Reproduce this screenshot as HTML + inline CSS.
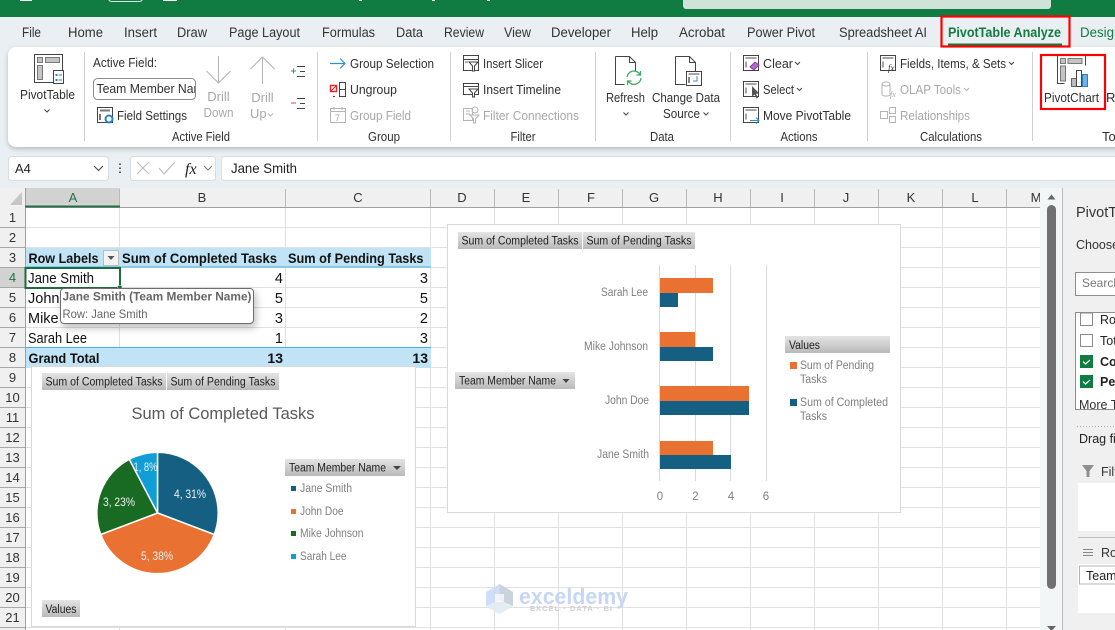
<!DOCTYPE html>
<html lang="en"><head><meta charset="utf-8"><title>Excel PivotChart</title>
<style>
html,body{margin:0;padding:0;background:#fff;width:1115px;height:630px;overflow:hidden}
svg{display:block}
text{font-family:"Liberation Sans",sans-serif;white-space:pre}
.r{font-size:13px;fill:#303030}
.g{font-size:13px;fill:#a8a8a8}
.tab{font-size:13.5px;fill:#333}
.cell{font-size:14.5px;fill:#111}
.b{font-size:14px;font-weight:bold;fill:#111}
.h{font-size:13px;fill:#333;text-anchor:middle}
.pb{font-size:11.5px;fill:#222}
.lg{font-size:11.5px;fill:#7f7f7f}
.pl{font-size:11.5px;fill:#f0f0f0}
.ic{fill:none;stroke:#444;stroke-width:1}
.ig{fill:none;stroke:#b4b4b4;stroke-width:1}
</style></head><body>
<svg width="1115" height="630" viewBox="0 0 1115 630" xmlns="http://www.w3.org/2000/svg">
<defs><linearGradient id="btn" x1="0" y1="0" x2="0" y2="1"><stop offset="0" stop-color="#e4e4e4"/><stop offset="1" stop-color="#b9b9b9"/></linearGradient>
<filter id="sh" x="-10%" y="-20%" width="120%" height="150%"><feDropShadow dx="0" dy="2" stdDeviation="2.5" flood-color="#000" flood-opacity=".22"/></filter>
<filter id="sh2" x="-10%" y="-30%" width="125%" height="190%"><feDropShadow dx="2" dy="4" stdDeviation="4" flood-color="#000" flood-opacity=".25"/></filter>
<clipPath id="inp"><rect x="96" y="78" width="99" height="21"/></clipPath>
<clipPath id="gridc"><rect x="0" y="188" width="1040" height="442"/></clipPath></defs>

<!-- title bar -->
<rect width="1115" height="630" fill="#e9eff2"/>
<rect width="1115" height="17" fill="#107c41"/>
<rect x="683" y="-4" width="368" height="13" rx="3" fill="#cfe3d8"/>
<path d="M20 .5H32M163 .5H177M359 .5H362M432 .5H435M487 .5H490" stroke="#fff" fill="none"/>
<rect x="108.500" y="-5" width="34" height="6.500" rx="3" fill="none" stroke="#d8e8de"/>

<!-- tabs -->
<text class="tab" x="22" y="37" textLength="19" lengthAdjust="spacingAndGlyphs">File</text>
<text class="tab" x="68" y="37" textLength="35" lengthAdjust="spacingAndGlyphs">Home</text>
<text class="tab" x="124" y="37" textLength="33" lengthAdjust="spacingAndGlyphs">Insert</text>
<text class="tab" x="177" y="37" textLength="30" lengthAdjust="spacingAndGlyphs">Draw</text>
<text class="tab" x="229" y="37" textLength="71" lengthAdjust="spacingAndGlyphs">Page Layout</text>
<text class="tab" x="322" y="37" textLength="53" lengthAdjust="spacingAndGlyphs">Formulas</text>
<text class="tab" x="396" y="37" textLength="27" lengthAdjust="spacingAndGlyphs">Data</text>
<text class="tab" x="444" y="37" textLength="40" lengthAdjust="spacingAndGlyphs">Review</text>
<text class="tab" x="504" y="37" textLength="27" lengthAdjust="spacingAndGlyphs">View</text>
<text class="tab" x="551" y="37" textLength="60" lengthAdjust="spacingAndGlyphs">Developer</text>
<text class="tab" x="631" y="37" textLength="27" lengthAdjust="spacingAndGlyphs">Help</text>
<text class="tab" x="679" y="37" textLength="46" lengthAdjust="spacingAndGlyphs">Acrobat</text>
<text class="tab" x="747" y="37" textLength="68" lengthAdjust="spacingAndGlyphs">Power Pivot</text>
<text class="tab" x="839" y="37" textLength="88" lengthAdjust="spacingAndGlyphs">Spreadsheet AI</text>
<text x="948" y="37" font-size="13.500" font-weight="bold" fill="#107c41" textLength="113" lengthAdjust="spacingAndGlyphs">PivotTable Analyze</text>
<text x="1080" y="37" font-size="13.500" fill="#107c41" textLength="48" lengthAdjust="spacingAndGlyphs">Designs</text>
<rect x="948" y="43.500" width="114" height="2" fill="#107c41"/>

<!-- ribbon -->
<rect x="8" y="47" width="1200" height="100" rx="8" fill="#fff" filter="url(#sh)"/>
<path d="M84.500 52V141M317.500 52V141M450.500 52V141M595.500 52V141M730.500 52V141M867.500 52V141M1032.500 52V141" stroke="#d0d0d0"/>

<!-- PivotTable icon -->
<rect x="34.500" y="54.500" width="28" height="28" fill="#fff" stroke="#444"/>
<rect x="37.500" y="57.500" width="5" height="5" fill="#c4c4c4" stroke="#777"/><rect x="45.500" y="57.500" width="14" height="5" fill="#c4c4c4" stroke="#777"/><rect x="37.500" y="65.500" width="5" height="14" fill="#c4c4c4" stroke="#777"/>
<rect x="53.500" y="70.500" width="10" height="13" fill="#fff" stroke="#444"/><path d="M55.500 74h2v2h-2zM55.500 79h2v2h-2z" fill="#2d7fc1"/><path d="M58.500 75H62M58.500 80H62" stroke="#2d7fc1"/>
<text class="r" x="20" y="99" textLength="55" lengthAdjust="spacingAndGlyphs">PivotTable</text>
<path d="M44.500 109.500l2.500 2.500 2.500-2.500" class="ic"/>

<text class="r" x="93" y="67" textLength="64" lengthAdjust="spacingAndGlyphs">Active Field:</text>
<rect x="93.500" y="78.500" width="102" height="21" rx="4" fill="#fff" stroke="#8a8a8a"/>
<text class="r" x="96.500" y="93" clip-path="url(#inp)" fill="#222" textLength="114" lengthAdjust="spacingAndGlyphs">Team Member Name</text>
<rect x="97.500" y="107.500" width="15" height="15" fill="#fff" stroke="#444"/><path d="M100 110.500h10M100 114v6" stroke="#777" stroke-width="2"/>
<circle cx="109" cy="119" r="3.500" fill="none" stroke="#2d7fc1" stroke-width="2"/>
<text class="r" x="117" y="120" textLength="70" lengthAdjust="spacingAndGlyphs">Field Settings</text>
<path d="M218.500 56V83M206.500 71l12 12 12-12" class="ig"/>
<text class="g" x="218.500" y="101" text-anchor="middle">Drill</text>
<text class="g" x="218.500" y="117" text-anchor="middle" textLength="30" lengthAdjust="spacingAndGlyphs">Down</text>
<path d="M262.500 84V57M250.500 69l12-12 12 12" class="ig"/>
<text class="g" x="262.500" y="102" text-anchor="middle">Drill</text>
<text class="g" x="250" y="118">Up</text><path d="M268 113.500l2.500 2.500 2.500-2.500" class="ig"/>
<path d="M291 71h5M293.500 68.500v5" stroke="#2e9e4f"/><path d="M297 66.500h8M300 71.500h5M297 76.500h8" stroke="#444"/>
<path d="M291 103h5" stroke="#e04040"/><path d="M297 98.500h8M300 103.500h5M297 108.500h8" stroke="#444"/>
<text class="r" x="172" y="141" textLength="58" lengthAdjust="spacingAndGlyphs">Active Field</text>

<!-- Group -->
<path d="M330 63.500H344M340 58.500l5 5-5 5" fill="none" stroke="#2d8fd8" stroke-width="1.200"/>
<text class="r" x="350" y="68" textLength="84" lengthAdjust="spacingAndGlyphs">Group Selection</text>
<rect x="330.500" y="85.500" width="6" height="6" fill="#fff" stroke="#e02b2b" stroke-width="1.500"/><path d="M331 91l5-5" stroke="#e02b2b"/><path d="M339.500 82.500h6v14h-6zM339.500 89.500h6M335 96.500h-2" class="ic"/>
<text class="r" x="350" y="94" textLength="47" lengthAdjust="spacingAndGlyphs">Ungroup</text>
<rect x="330.500" y="108.500" width="15" height="14" class="ig"/><path d="M330.500 111.500h15M334 107v3M342 107v3" class="ig"/><text x="335" y="121" font-size="9" fill="#a8a8a8">7</text>
<text class="g" x="350" y="120" textLength="61" lengthAdjust="spacingAndGlyphs">Group Field</text>
<text class="r" x="368" y="141" textLength="32" lengthAdjust="spacingAndGlyphs">Group</text>

<!-- Filter -->
<rect x="463.500" y="55.500" width="15" height="15" fill="#fff" stroke="#444"/><path d="M463.500 59.500h15" stroke="#444"/><path d="M469 62h9l-3.500 4v5h-2v-5z" fill="#fff" stroke="#444"/><path d="M465 62h3" stroke="#2d7fc1"/>
<text class="r" x="483" y="68" textLength="60" lengthAdjust="spacingAndGlyphs">Insert Slicer</text>
<rect x="463.500" y="83.500" width="15" height="11" fill="#fff" stroke="#444"/><path d="M463.500 86.500h15" stroke="#444"/><path d="M469 89h9l-3.500 4v4h-2v-4z" fill="#fff" stroke="#444"/>
<text class="r" x="483" y="94" textLength="78" lengthAdjust="spacingAndGlyphs">Insert Timeline</text>
<path d="M463.500 108.500h9v12h-9zM466 111h4M466 114h4" class="ig"/><path d="M470 115h9l-3.500 4v4h-2v-4z" fill="#fff" stroke="#b4b4b4"/><circle cx="475" cy="110" r="3" class="ig"/>
<text class="g" x="483" y="120" textLength="96" lengthAdjust="spacingAndGlyphs">Filter Connections</text>
<text class="r" x="523" y="141" text-anchor="middle" textLength="25" lengthAdjust="spacingAndGlyphs">Filter</text>

<!-- Data -->
<path d="M615.500 56.500h14l6 6v9M635.500 62.500h-6v-6M615.500 56.500v28h9" fill="#fff" stroke="#444"/>
<path d="M627 77a7 7 0 0 1 13-2.500M641 78a7 7 0 0 1-13 3" fill="none" stroke="#3aa864" stroke-width="1.300"/><path d="M640.500 71v4h-4M627.500 85v-4h4" fill="none" stroke="#3aa864" stroke-width="1.200"/>
<text class="r" x="606" y="102" textLength="39" lengthAdjust="spacingAndGlyphs">Refresh</text>
<path d="M623.500 112.500l2.500 2.500 2.500-2.500" class="ic"/>
<path d="M675.500 56.500h14l6 6v9M695.500 62.500h-6v-6M675.500 56.500v28h10" fill="#fff" stroke="#444"/>
<rect x="686.500" y="71.500" width="15" height="14" fill="#fff" stroke="#444"/><path d="M688.500 74h11" stroke="#888" stroke-width="1.500"/><path d="M689 77v6" stroke="#888" stroke-width="2"/><path d="M697 76v5h-4" fill="none" stroke="#2d8fd8"/>
<text class="r" x="652" y="102" textLength="68" lengthAdjust="spacingAndGlyphs">Change Data</text>
<text class="r" x="663" y="118" textLength="37" lengthAdjust="spacingAndGlyphs">Source</text><path d="M703.500 112.500l2.500 2.500 2.500-2.500" class="ic"/>
<text class="r" x="662" y="141" text-anchor="middle" textLength="24" lengthAdjust="spacingAndGlyphs">Data</text>

<!-- Actions -->
<rect x="743.500" y="55.500" width="15" height="15" fill="#fff" stroke="#444"/><path d="M745.500 58h11M746 61.500v6" stroke="#888" stroke-width="1.500"/><path d="M750 67l5-5 4 3-5 5z" fill="#b26ac8" stroke="#8a3fa5"/>
<text class="r" x="763" y="68" textLength="30" lengthAdjust="spacingAndGlyphs">Clear</text><path d="M795 62l2.500 2.500L800 62" class="ic"/>
<rect x="743.500" y="81.500" width="15" height="15" fill="#fff" stroke="#444"/><path d="M745.500 84h11M746 87.500v6" stroke="#888" stroke-width="1.500"/><path d="M752 86v11l2.500-2.500 2 4 1.500-.8-2-4h3.500z" fill="#555"/>
<text class="r" x="763" y="94" textLength="31" lengthAdjust="spacingAndGlyphs">Select</text><path d="M797 88l2.500 2.500L802 88" class="ic"/>
<rect x="743.500" y="107.500" width="15" height="15" fill="#fff" stroke="#444"/><path d="M745.500 110h11M746 113.500v6" stroke="#888" stroke-width="1.500"/><path d="M750 120.500h9M756 117.500l3 3-3 3" fill="none" stroke="#2d8fd8"/>
<text class="r" x="763" y="120" textLength="88" lengthAdjust="spacingAndGlyphs">Move PivotTable</text>
<text class="r" x="799" y="141" text-anchor="middle" textLength="37" lengthAdjust="spacingAndGlyphs">Actions</text>

<!-- Calculations -->
<rect x="880.500" y="55.500" width="15" height="15" fill="#fff" stroke="#444"/><path d="M882.500 58h11M883 61.500v6" stroke="#888" stroke-width="1.500"/><text x="888" y="71" font-size="9" font-style="italic" style="font-family:'Liberation Serif',serif" fill="#333">fx</text>
<text class="r" x="900" y="68" textLength="106" lengthAdjust="spacingAndGlyphs">Fields, Items, &amp; Sets</text><path d="M1009 62l2.500 2.500L1014 62" class="ic"/>
<path d="M882 84.500v10c0 2 8 2 8 0v-10" class="ig"/><ellipse cx="886" cy="84" rx="4" ry="2" class="ig"/><text x="890" y="97" font-size="8" font-style="italic" style="font-family:'Liberation Serif',serif" fill="#aaa">fx</text>
<text class="g" x="900" y="94" textLength="61" lengthAdjust="spacingAndGlyphs">OLAP Tools</text><path d="M964 88l2.500 2.500L969 88" class="ig"/>
<rect x="880.500" y="111.500" width="7" height="7" class="ig"/><rect x="889.500" y="107.500" width="6" height="6" class="ig"/><rect x="889.500" y="116.500" width="6" height="6" class="ig"/>
<text class="g" x="900" y="120" textLength="70" lengthAdjust="spacingAndGlyphs">Relationships</text>
<text class="r" x="951" y="141" text-anchor="middle" textLength="62" lengthAdjust="spacingAndGlyphs">Calculations</text>

<!-- Tools -->
<path d="M1057.500 55.500h28v10M1057.500 55.500v28h7" fill="#fff" stroke="#444"/>
<rect x="1060.500" y="58.500" width="5" height="5" fill="#c4c4c4" stroke="#777"/><rect x="1068" y="58.500" width="14" height="5" fill="#c4c4c4" stroke="#777"/><rect x="1060.500" y="66" width="5" height="15" fill="#c4c4c4" stroke="#777"/>
<rect x="1071.500" y="78.500" width="5" height="8" fill="#bbb" stroke="#666"/><rect x="1076.500" y="70.500" width="5" height="16" fill="#fff" stroke="#444"/><rect x="1082.500" y="74.500" width="5" height="12" fill="#6fb2e6" stroke="#2d7fc1"/>
<text class="r" x="1044" y="102" textLength="55" lengthAdjust="spacingAndGlyphs">PivotChart</text>
<text class="r" x="1106" y="102">Re</text>
<text class="r" x="1102" y="141">Tools</text>

<!-- red highlights -->
<rect x="941.500" y="16.500" width="128" height="30" fill="none" stroke="#f00" stroke-width="2.200"/>
<rect x="1041" y="55" width="64" height="54" fill="none" stroke="#f00" stroke-width="2.200"/>

<!-- formula bar -->
<rect x="8.500" y="156.500" width="100" height="24" rx="3" fill="#fff" stroke="#dcdcdc"/>
<text x="15" y="173" font-size="13" fill="#222">A4</text>
<path d="M94 166l4.500 4.500L103 166" fill="none" stroke="#444"/>
<path d="M120 163.500v1.500M120 167.500v1.500M120 171.500v1.500" stroke="#333" stroke-width="1.600"/>
<rect x="130.500" y="156.500" width="85" height="24" rx="3" fill="#fff" stroke="#dcdcdc"/>
<path d="M137 162l12 12M149 162l-12 12M159 168l5 6 11-12" fill="none" stroke="#bdbdbd" stroke-width="1.100"/>
<text x="185" y="174" font-size="16" font-style="italic" style="font-family:'Liberation Serif',serif" fill="#222">fx</text>
<path d="M204 166l4 4 4-4" fill="none" stroke="#777"/>
<rect x="221.500" y="156.500" width="920" height="24" rx="3" fill="#fff" stroke="#dcdcdc"/>
<text x="231" y="173" font-size="14" fill="#222" textLength="66" lengthAdjust="spacingAndGlyphs">Jane Smith</text>

<!-- sheet -->
<rect x="0" y="188" width="1115" height="442" fill="#fff"/>
<g clip-path="url(#gridc)">
<path d="M25 227.500H1040M25 247.500H1040M25 267.500H1040M25 287.500H1040M25 307.500H1040M25 327.500H1040M25 347.500H1040M25 367.500H1040M25 387.500H1040M25 407.500H1040M25 427.500H1040M25 447.500H1040M25 467.500H1040M25 487.500H1040M25 507.500H1040M25 527.500H1040M25 547.500H1040M25 567.500H1040M25 587.500H1040M25 607.500H1040M25 627.500H1040" stroke="#e0e0e0"/>
<path d="M119.500 208V630M285.500 208V630M430.500 208V630M494.500 208V630M558.500 208V630M622.500 208V630M686.500 208V630M750.500 208V630M814.500 208V630M878.500 208V630M942.500 208V630M1006.500 208V630" stroke="#e0e0e0"/>
<!-- headers -->
<rect x="0" y="188" width="1040" height="19" fill="#f0f0f0"/>
<rect x="0" y="207" width="25" height="423" fill="#f0f0f0"/>
<path d="M22 192v13h-12z" fill="#c6c6c6"/>
<rect x="25" y="188" width="95" height="19" fill="#d2d2d2"/>
<rect x="0" y="268" width="25" height="19" fill="#d2d2d2"/>
<path d="M25 207.500H1040M25.500 188V630" stroke="#a0a0a0"/>
<path d="M119.500 189V207M285.500 189V207M430.500 189V207M494.500 189V207M558.500 189V207M622.500 189V207M686.500 189V207M750.500 189V207M814.500 189V207M878.500 189V207M942.500 189V207M1006.500 189V207" stroke="#bbb"/>
<path d="M0 227.500H25M0 247.500H25M0 267.500H25M0 287.500H25M0 307.500H25M0 327.500H25M0 347.500H25M0 367.500H25M0 387.500H25M0 407.500H25M0 427.500H25M0 447.500H25M0 467.500H25M0 487.500H25M0 507.500H25M0 527.500H25M0 547.500H25M0 567.500H25M0 587.500H25M0 607.500H25M0 627.500H25" stroke="#a8a8a8"/>
<rect x="25" y="205.500" width="95" height="2" fill="#217346"/>
<text class="h" x="73" y="202" style="fill:#217346">A</text>
<text class="h" x="202" y="202">B</text><text class="h" x="358" y="202">C</text><text class="h" x="462" y="202">D</text><text class="h" x="526" y="202">E</text><text class="h" x="591" y="202">F</text><text class="h" x="654" y="202">G</text><text class="h" x="718" y="202">H</text><text class="h" x="782" y="202">I</text><text class="h" x="846" y="202">J</text><text class="h" x="911" y="202">K</text><text class="h" x="975" y="202">L</text><text class="h" x="1036" y="202">M</text>
<text class="h" x="12.500" y="222">1</text><text class="h" x="12.500" y="242">2</text><text class="h" x="12.500" y="262">3</text><text class="h" x="12.500" y="282" style="fill:#217346">4</text><text class="h" x="12.500" y="302">5</text><text class="h" x="12.500" y="322">6</text><text class="h" x="12.500" y="342">7</text><text class="h" x="12.500" y="362">8</text><text class="h" x="12.500" y="382">9</text><text class="h" x="12.500" y="402">10</text><text class="h" x="12.500" y="422">11</text><text class="h" x="12.500" y="442">12</text><text class="h" x="12.500" y="462">13</text><text class="h" x="12.500" y="482">14</text><text class="h" x="12.500" y="502">15</text><text class="h" x="12.500" y="522">16</text><text class="h" x="12.500" y="542">17</text><text class="h" x="12.500" y="562">18</text><text class="h" x="12.500" y="582">19</text><text class="h" x="12.500" y="602">20</text><text class="h" x="12.500" y="622">21</text>
</g>

<!-- pivot table -->
<rect x="26" y="248" width="405" height="19" fill="#c0e4f5"/>
<rect x="26" y="266.500" width="405" height="1" fill="#45b0e1"/>
<rect x="26" y="348" width="405" height="20" fill="#c0e4f5"/>
<rect x="26" y="347" width="405" height="1" fill="#45b0e1"/>
<text class="b" x="28.500" y="263" textLength="70" lengthAdjust="spacingAndGlyphs">Row Labels</text>
<rect x="103.500" y="250.500" width="15" height="15" fill="#f3f3f3" stroke="#bbb"/><path d="M107.500 256h7l-3.500 4z" fill="#555"/>
<text class="b" x="122" y="263" textLength="155" lengthAdjust="spacingAndGlyphs">Sum of Completed Tasks</text>
<text class="b" x="288" y="263" textLength="135.500" lengthAdjust="spacingAndGlyphs">Sum of Pending Tasks</text>
<text class="cell" x="28" y="283" textLength="66" lengthAdjust="spacingAndGlyphs">Jane Smith</text>
<text class="cell" x="28" y="303">John Doe</text>
<text class="cell" x="28" y="323">Mike Johnson</text>
<text class="cell" x="28" y="343" textLength="59" lengthAdjust="spacingAndGlyphs">Sarah Lee</text>
<text class="b" x="28.500" y="363" textLength="71" lengthAdjust="spacingAndGlyphs">Grand Total</text>
<g text-anchor="end">
<text class="cell" x="283" y="283">4</text><text class="cell" x="428" y="283">3</text>
<text class="cell" x="283" y="303">5</text><text class="cell" x="428" y="303">5</text>
<text class="cell" x="283" y="323">3</text><text class="cell" x="428" y="323">2</text>
<text class="cell" x="283" y="343">1</text><text class="cell" x="428" y="343">3</text>
<text class="b" x="283" y="363">13</text><text class="b" x="428" y="363">13</text>
</g>
<rect x="25.500" y="268" width="94.500" height="20" fill="none" stroke="#1d6b41" stroke-width="2"/>
<rect x="117.500" y="285.500" width="4.500" height="4.500" fill="#1d6b41" stroke="#fff" stroke-width=".5"/>

<!-- tooltip -->
<rect x="60.500" y="288.500" width="193" height="35" rx="3.500" fill="#fff" stroke="#6e6e6e" filter="url(#sh2)"/>
<text x="62.500" y="300.500" font-size="12" font-weight="bold" fill="#666" textLength="189" lengthAdjust="spacingAndGlyphs">Jane Smith (Team Member Name)</text>
<text x="62.500" y="318" font-size="12" fill="#666" textLength="85" lengthAdjust="spacingAndGlyphs">Row: Jane Smith</text>

<!-- pie chart -->
<rect x="31.500" y="366.500" width="384" height="260" fill="#fff" stroke="#d9d9d9"/>
<rect x="42" y="373" width="124" height="17" fill="url(#btn)"/><text class="pb" x="45.500" y="385.500" textLength="117" lengthAdjust="spacingAndGlyphs">Sum of Completed Tasks</text>
<rect x="167" y="373" width="112" height="17" fill="url(#btn)"/><text class="pb" x="170.500" y="385.500" textLength="105" lengthAdjust="spacingAndGlyphs">Sum of Pending Tasks</text>
<text x="131.500" y="419" font-size="16.500" fill="#595959" textLength="183" lengthAdjust="spacingAndGlyphs">Sum of Completed Tasks</text>
<g stroke="#fff" stroke-width="1.500">
<path d="M157.500 513V452.300A60.700 60.700 0 0 1 214.250 534.500Z" fill="#156082"/>
<path d="M157.500 513L214.250 534.500A60.700 60.700 0 0 1 100.750 534.500Z" fill="#e97132"/>
<path d="M157.500 513L100.750 534.500A60.700 60.700 0 0 1 129.300 459.300Z" fill="#196b24"/>
<path d="M157.500 513L129.300 459.300A60.700 60.700 0 0 1 157.500 452.300Z" fill="#0f9ed5"/>
</g>
<text class="pl" x="174" y="498" textLength="32" lengthAdjust="spacingAndGlyphs">4, 31%</text>
<text class="pl" x="141" y="560" textLength="32" lengthAdjust="spacingAndGlyphs">5, 38%</text>
<text class="pl" x="103" y="506" textLength="32" lengthAdjust="spacingAndGlyphs">3, 23%</text>
<text class="pl" x="133.500" y="471" textLength="24" lengthAdjust="spacingAndGlyphs">1, 8%</text>
<rect x="285" y="459" width="120" height="17" fill="url(#btn)"/><text class="pb" x="289" y="471.500" textLength="97" lengthAdjust="spacingAndGlyphs">Team Member Name</text><path d="M393 466h8l-4 4z" fill="#444"/>
<rect x="291" y="486" width="5" height="5" fill="#156082"/><text class="lg" x="300" y="492" textLength="52" lengthAdjust="spacingAndGlyphs">Jane Smith</text>
<rect x="291" y="509" width="5" height="5" fill="#e97132"/><text class="lg" x="300" y="515" textLength="43.500" lengthAdjust="spacingAndGlyphs">John Doe</text>
<rect x="291" y="531" width="5" height="5" fill="#196b24"/><text class="lg" x="300" y="537" textLength="63.500" lengthAdjust="spacingAndGlyphs">Mike Johnson</text>
<rect x="291" y="554" width="5" height="5" fill="#0f9ed5"/><text class="lg" x="300" y="560" textLength="46.500" lengthAdjust="spacingAndGlyphs">Sarah Lee</text>
<rect x="42" y="600" width="38" height="17" fill="url(#btn)"/><text class="pb" x="45.500" y="613" textLength="31" lengthAdjust="spacingAndGlyphs">Values</text>

<!-- bar chart -->
<rect x="447.500" y="224.500" width="453" height="288" fill="#fff" stroke="#d9d9d9"/>
<rect x="458" y="232" width="124" height="17" fill="url(#btn)"/><text class="pb" x="461.500" y="244.500" textLength="117" lengthAdjust="spacingAndGlyphs">Sum of Completed Tasks</text>
<rect x="583" y="232" width="112" height="17" fill="url(#btn)"/><text class="pb" x="586.500" y="244.500" textLength="105" lengthAdjust="spacingAndGlyphs">Sum of Pending Tasks</text>
<rect x="455" y="372" width="120" height="17" fill="url(#btn)"/><text class="pb" x="459" y="384.500" textLength="97" lengthAdjust="spacingAndGlyphs">Team Member Name</text><path d="M562.500 379h7l-3.500 4z" fill="#444"/>
<path d="M659.500 265V481M695.500 265V481M730.500 265V481M766.500 265V481" stroke="#d9d9d9"/>
<rect x="660" y="278" width="53" height="15" fill="#e97132"/><rect x="660" y="293" width="18" height="14" fill="#156082"/>
<rect x="660" y="332" width="35" height="15" fill="#e97132"/><rect x="660" y="347" width="53" height="14" fill="#156082"/>
<rect x="660" y="386" width="89" height="15" fill="#e97132"/><rect x="660" y="401" width="89" height="14" fill="#156082"/>
<rect x="660" y="441" width="53" height="14" fill="#e97132"/><rect x="660" y="455" width="71" height="14" fill="#156082"/>
<g text-anchor="end">
<text class="lg" x="648" y="296" textLength="47" lengthAdjust="spacingAndGlyphs">Sarah Lee</text>
<text class="lg" x="648" y="350" textLength="64" lengthAdjust="spacingAndGlyphs">Mike Johnson</text>
<text class="lg" x="649" y="404" textLength="44" lengthAdjust="spacingAndGlyphs">John Doe</text>
<text class="lg" x="649" y="458" textLength="52" lengthAdjust="spacingAndGlyphs">Jane Smith</text>
</g>
<g text-anchor="middle"><text class="lg" x="660" y="500">0</text><text class="lg" x="695.500" y="500">2</text><text class="lg" x="731" y="500">4</text><text class="lg" x="766" y="500">6</text></g>
<rect x="785" y="336" width="105" height="17" fill="url(#btn)"/><text class="pb" x="789" y="349" textLength="31" lengthAdjust="spacingAndGlyphs">Values</text>
<rect x="790" y="362" width="7" height="7" fill="#e97132"/><text class="lg" x="800" y="369" textLength="74" lengthAdjust="spacingAndGlyphs">Sum of Pending</text><text class="lg" x="800" y="383" textLength="27" lengthAdjust="spacingAndGlyphs">Tasks</text>
<rect x="790" y="399" width="7" height="7" fill="#156082"/><text class="lg" x="800" y="406" textLength="88" lengthAdjust="spacingAndGlyphs">Sum of Completed</text><text class="lg" x="800" y="420" textLength="27" lengthAdjust="spacingAndGlyphs">Tasks</text>

<!-- watermark -->
<path d="M486 592l13.500-8 13.500 8v14l-13.500 8-13.500-8z" fill="#c9d8f8" opacity=".85"/>
<path d="M499.500 584l13.500 8v14l-13.500-6z" fill="#c8ced6" opacity=".8"/>
<path d="M486 606l13.500-6 13.500 6-13.500 8z" fill="#e4eef2" opacity=".9"/>
<rect x="495" y="594" width="9" height="8" fill="#fff" opacity=".7"/>
<text x="519" y="604" font-size="22" font-weight="bold" fill="#c6d6f6" textLength="109" lengthAdjust="spacingAndGlyphs">exceldemy</text>
<text x="530" y="611" font-size="7.500" font-weight="bold" fill="#cfcfcf" textLength="82" lengthAdjust="spacing">EXCEL · DATA · BI</text>

<!-- scrollbar -->
<rect x="1040" y="188" width="22" height="442" fill="#f3f6f7"/>
<rect x="1047" y="205" width="9" height="384" rx="4.500" fill="#707070"/>
<path d="M1047.500 199.500l4-5 4 5z" fill="#666"/><path d="M1047 626h9l-4.500 5z" fill="#666"/>

<!-- pivot field panel -->
<rect x="1062" y="188" width="53" height="442" fill="#f0f0f0"/>
<path d="M1062.500 188V630" stroke="#bcbcbc"/>
<text x="1076" y="217" font-size="14.500" fill="#333">PivotTable Fields</text>
<text x="1076" y="249" font-size="12.500" fill="#333">Choose fields</text>
<rect x="1075.500" y="272.500" width="60" height="23" fill="#fff" stroke="#8e8e8e"/><text x="1082" y="287" font-size="12" fill="#777">Search</text>
<rect x="1075.500" y="312.500" width="60" height="97" fill="#fff" stroke="#8e8e8e"/>
<rect x="1080.500" y="313" width="12" height="12.500" fill="#fff" stroke="#8a8a8a"/><text x="1100" y="324" font-size="12.500" fill="#222">Row</text>
<rect x="1080.500" y="334.500" width="12" height="12" fill="#fff" stroke="#8a8a8a"/><text x="1100" y="345" font-size="12.500" fill="#222">Total</text>
<rect x="1080" y="355" width="13" height="13" fill="#107c41"/><path d="M1083 361.500l2.500 2.500 4.500-4" fill="none" stroke="#fff" stroke-width="1.200"/><text x="1100" y="366" font-size="12.500" font-weight="bold" fill="#222">Completed</text>
<rect x="1080" y="375" width="13" height="13" fill="#107c41"/><path d="M1083 381.500l2.500 2.500 4.500-4" fill="none" stroke="#fff" stroke-width="1.200"/><text x="1100" y="386" font-size="12.500" font-weight="bold" fill="#222">Pending</text>
<text x="1079" y="409" font-size="12.500" fill="#333">More Tables</text>
<path d="M1077 426.500H1115" stroke="#aaa" stroke-dasharray="1 2"/>
<text x="1079" y="443" font-size="12.500" fill="#222">Drag fields</text>
<path d="M1082 465h12l-4.500 6v6h-3v-6z" fill="#8e8e8e"/>
<text x="1101" y="476" font-size="12.500" fill="#333">Filters</text>
<rect x="1078" y="483" width="40" height="48" fill="#fff"/>
<path d="M1078 537.500H1115" stroke="#c0c0c0"/>
<path d="M1083 549.500h10M1083 552.500h10M1083 555.500h10" stroke="#888"/>
<text x="1101" y="557" font-size="12.500" fill="#333">Rows</text>
<rect x="1078" y="564" width="40" height="49" fill="#fff"/>
<rect x="1079.500" y="566" width="60" height="18" fill="#fff" stroke="#b5b5b5"/>
<text x="1086" y="580" font-size="12.500" fill="#222">Team Member</text>
</svg>
</body></html>
